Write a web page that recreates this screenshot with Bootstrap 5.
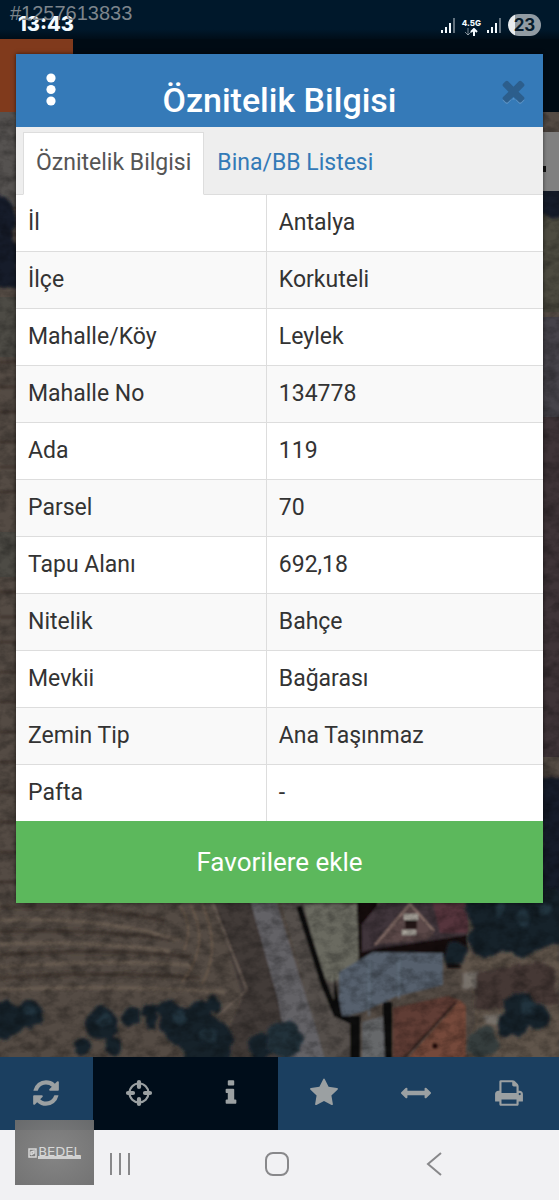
<!DOCTYPE html>
<html lang="tr">
<head>
<meta charset="utf-8">
<meta name="viewport" content="width=device-width, initial-scale=1">
<title>Öznitelik Bilgisi</title>
<link href="https://cdn.jsdelivr.net/npm/bootstrap@5.3.0/dist/css/bootstrap.min.css" rel="stylesheet">
<style>
body{font-family:Roboto,sans-serif;font-size:23px;line-height:32px;color:#333;background:#000d18}
.statusbar{height:39px;background:linear-gradient(#00182b 75%,#000d18);padding:10px 18px 0;color:#f4fbff}
.status-icons{gap:6px}
.clock{font:800 20px/28px Inter,sans-serif}
.net{font:800 8px/10px Inter,sans-serif}
.battery{width:33px;height:22px;border-radius:11px;background:linear-gradient(90deg,#e8ecef 7px,#919ba3 7px);color:#071b2b;font:700 17px/22px Inter,sans-serif}
.listing-no{left:10px;top:2px;font:20px/23px "Liberation Sans",sans-serif;color:#7d858c}
.appbar{height:73px;background:#000b14}
.appbar-tile{width:73px;background:#803a1c}
.map-area{background:#4a453f;min-height:300px}
.map-area svg{display:block;left:0;top:0}
.sheet-layer{top:54px;padding:0 16px}
.sheet{background:#fff;box-shadow:0 0 4px rgba(0,0,0,.6)}
.sheet-head{height:73px;background:#357ab8;color:#fff}
.sheet-head h1{font-size:34px;line-height:40px;font-weight:500;padding-top:26px}
.icon-btn{border:0;background:none;padding:0;line-height:0;color:inherit}
.menu-btn{left:22px;top:16px;width:26px;color:#fff}
.close-btn{right:13px;top:20px;color:#2c5e8c}
.tabs{height:68px;background:#eee;border-bottom:1px solid #ddd;padding:5px 7px 0}
.tabs .nav-link{border:1px solid transparent;border-radius:0;padding:14px 12px;line-height:32px;color:#337ab7}
.tabs .nav-link.active{background:#fff;border-color:#ddd #ddd #fff;color:#555}
.tabs .nav-link{height:63px}
.facts{margin:0;color:#333;table-layout:fixed;line-height:32px}
.facts th,.facts td{font-weight:400;padding:12px;border:0;border-bottom:1px solid #ddd;box-shadow:none;background:#fff}
.facts th{width:47.5%;border-right:1px solid #ddd}
.facts tr:nth-child(even)>*{background:#f9f9f9}
.facts tr:last-child>*{border-bottom:0}
.fav-btn,.fav-btn:hover{background:#5cb85c;border:0;border-radius:0;color:#fff;font-size:26px;line-height:34px;padding:24px 12px}
.toolbar{height:73px;background:#1b3f60;padding-right:4px}
.toolbar button{flex:1 1 0;background:#1b3f60;color:#9ba0a2}
.toolbar button.dim{background:#000d1a}
.toolbar svg{width:30px;height:30px;margin-bottom:2px}
.sysnav{height:70px;background:#f1f1f3;color:#88888a;gap:132px;padding:0 6px 2px 0}
.brand-mark{left:15px;bottom:15px;width:79px;height:65px;background:radial-gradient(rgba(130,130,130,.97),rgba(108,108,108,.95));color:#d8d8d8;gap:1px}
.brand-mark b{font:13px/9px "DejaVu Sans",sans-serif;border-bottom:3px solid #d0d0d0}
</style>
</head>
<body>
<div class="position-relative min-vh-100 d-flex flex-column overflow-hidden">
  <header class="statusbar d-flex justify-content-between">
    <span class="clock">13:43</span>
    <div class="status-icons d-flex align-items-start">
      <svg width="15" height="16" viewBox="0 0 15 16" class="mt-2" fill="currentColor"><path d="M0 12h2v3H0zM4 9h2v6H4zM8 5h2v10H8z"/><path d="M12 0h2v15h-2z" opacity=".4"/></svg>
      <div class="net text-center mt-2">4.5G<svg class="d-block mx-auto" width="13" height="8" viewBox="0 0 13 8" fill="none" stroke="currentColor"><path d="M3 0v7M0 4l3 3 3-3" opacity=".5"/><path d="M9 8V1M6 4l3-3 3 3" stroke-width="2"/></svg></div>
      <svg width="15" height="16" viewBox="0 0 15 16" class="mt-2" fill="currentColor"><path d="M0 12h2v3H0zM4 9h2v6H4zM8 5h2v10H8z"/><path d="M12 0h2v15h-2z" opacity=".4"/></svg>
      <span class="battery text-center mt-1">23</span>
    </div>
  </header>
  <span class="listing-no position-absolute">#1257613833</span>
  <div class="appbar d-flex"><div class="appbar-tile"></div></div>

  <main class="map-area flex-fill position-relative">
    <svg class="position-absolute w-100 h-100" viewBox="0 0 559 945" preserveAspectRatio="xMidYMax slice" aria-hidden="true">
      <defs>
        <filter id="soft" x="-10%" y="-10%" width="120%" height="120%"><feTurbulence type="fractalNoise" baseFrequency=".06" numOctaves="3" seed="4" result="n"/><feDisplacementMap in="SourceGraphic" in2="n" scale="12" xChannelSelector="R" yChannelSelector="G"/><feGaussianBlur stdDeviation="1.6"/></filter>
        <filter id="edge"><feGaussianBlur stdDeviation=".9"/></filter>
        <filter id="grain" x="0" y="0" width="100%" height="100%"><feTurbulence type="fractalNoise" baseFrequency=".07 .1" numOctaves="4" seed="9"/><feColorMatrix values="0 0 0 0 0  0 0 0 0 0  0 0 0 0 0  1.6 0 0 0 -.6"/></filter>
      </defs>
      <rect width="559" height="945" fill="#544b44"/>
      <!-- field edges beside the dialog -->
      <path fill="#555250" d="M0 0h20v95H0z"/><path fill="#4d4b45" d="M0 185h20v60H0zM0 420h20v45H0z"/><path fill="#4d4b40" d="M540 80h19v120h-19z"/><path fill="#46434a" d="M540 205h19v100h-19z"/><path fill="#3f3438" d="M540 305h19v340h-19z"/>
      <g filter="url(#soft)" fill="#141e29"><path d="M-5 80l18 10 8 90-26-4zM538 60h30v50l-30-8zM540 665h30v130h-30z"/></g>
      <!-- ploughed field -->
      <g filter="url(#edge)" fill="none" stroke-width="4">
        <path stroke="#453b34" d="M0 250h22M0 275h22M0 300h22M0 330h22M0 355h22M0 380h22M0 480h22M0 505h22M0 530h22M0 560h22M0 590h22M0 620h22M0 650h22M0 680h22M0 710h22M0 740h22M0 770h22M0 795q90-3 165 14M0 820q90-4 180 8M0 843q110-8 190 2M0 866q100-8 200 0"/>
        <path stroke="#665a50" d="M0 808q100-4 180 20M0 832q90-4 170 7M0 855q110-8 190-2M0 878q100-6 225 2"/>
        <path stroke="#69594b" stroke-width="2" d="M190 792q22 40-8 78M202 792q20 45 0 80M180 794q14 20 4 44"/>
      </g>
      <g filter="url(#edge)">
        <path fill="#433b39" d="M214 788h40l32 100v60H215l28-62z"/>
        <path fill="none" stroke="#6d6158" stroke-width="2" d="M213 792l34 86-30 26"/>
        <path fill="#636266" d="M250 788h26l50 160h-38l-10-60z"/><path fill="#55504b" d="M280 788h60l15 160h-30z"/>
        <path fill="#6b6a61" d="M304 792h58v60l-28 18-12-3z"/><path fill="none" stroke="#11100f" stroke-width="6" d="M299 794l24 76 14 34"/>
        <path fill="#14100f" d="M357 788h20v28l90 6v34h-20v-12l-88 10z"/>
        <path fill="#41343a" d="M362 812l20-24h85v35l-87 13-18 4z"/><path fill="#56343d" d="M432 788h36v33h-28z"/><path fill="#5b4a49" d="M377 832l32-40 25 30-8 6z"/><path fill="none" stroke="#8c746d" stroke-width="2" d="M375 833l35-41 24 27"/><path fill="#a9a49c" d="M404 802h14v6h-14zM402 818h14v5h-14z"/><path fill="#221517" d="M405 808h12v9h-12z"/>
        <path fill="#57616d" d="M339 860l34-20 70 1v32l-48 12-6 3-26 12-24 6z"/><path fill="none" stroke="#66798a" d="M369 850v54M399 845v42"/>
        <path fill="#100b0a" d="M334 862l8 42h18v44h-10v-36l-16-8zM383 890h9v58h-9z"/><path fill="#66676b" d="M362 910l21-6 2 44h-23z"/>
        <path fill="#603c35" d="M393 896l55-12 12 4-60 60h-7z"/><path fill="#75493b" d="M460 888l6 6v54h-60z"/><path stroke="#35211e" stroke-width="2" d="M456 890l-54 58"/><circle cx="435" cy="934" r="3" fill="#20100e"/>
      </g>
      <path filter="url(#soft)" fill="#60554c" d="M448 840l111-10v128h-86V880z"/>
      <g filter="url(#soft)"><path fill="#453835" d="M473 862l50-12 30 4 10 40-90 4z"/><path fill="#77716a" d="M462 862h14v14h-14zM484 904l20-2v10h-20z"/></g>
      <!-- tree crowns -->
      <g filter="url(#soft)" fill="#15212b">
        <circle cx="488" cy="800" r="22"/><circle cx="488" cy="828" r="18"/><circle cx="520" cy="810" r="34"/><circle cx="550" cy="806" r="28"/><circle cx="455" cy="842" r="12"/>
        <circle cx="519" cy="898" r="17"/><circle cx="538" cy="906" r="12"/><circle cx="512" cy="912" r="14"/>
        <circle cx="8" cy="908" r="17"/><circle cx="30" cy="902" r="14"/><circle cx="102" cy="912" r="16"/><circle cx="84" cy="934" r="9"/><circle cx="112" cy="934" r="9"/>
        <circle cx="131" cy="904" r="9"/><circle cx="149" cy="898" r="9"/><circle cx="151" cy="910" r="7"/><circle cx="168" cy="898" r="12"/><circle cx="182" cy="914" r="20"/><circle cx="205" cy="930" r="27"/><circle cx="214" cy="892" r="9"/><circle cx="198" cy="902" r="13"/><circle cx="262" cy="934" r="14"/>
        <circle cx="284" cy="928" r="18" fill="#24303a"/><circle cx="484" cy="930" r="16" fill="#353c3c"/>
      </g>
      <g filter="url(#soft)" fill="#2c4250" opacity=".55"><circle cx="500" cy="796" r="7"/><circle cx="522" cy="806" r="8"/><circle cx="545" cy="796" r="7"/><circle cx="30" cy="898" r="6"/><circle cx="104" cy="908" r="7"/><circle cx="180" cy="906" r="8"/><circle cx="208" cy="924" r="9"/><circle cx="528" cy="896" r="7"/></g>
      <rect width="559" height="945" filter="url(#grain)" opacity=".4"/>
      <path fill="#808080" d="M540 20h19v59h-19z"/><path fill="#111" d="M542 54h4v6h-4z"/>
    </svg>
  </main>

  <div class="toolbar d-flex">
    <button class="icon-btn" aria-label="Yenile"><svg viewBox="0 0 1792 1792" fill="currentColor"><path d="M1639 1056q0 5-1 7-64 268-268 434.500t-478 166.500q-146 0-282.500-55t-243.500-157l-129 129q-19 19-45 19t-45-19-19-45v-448q0-26 19-45t45-19h448q26 0 45 19t19 45-19 45l-137 137q71 66 161 102t187 36q134 0 250-65t186-179q11-17 53-117 8-23 30-23h192q13 0 22.500 9.500t9.500 22.500zm25-800v448q0 26-19 45t-45 19h-448q-26 0-45-19t-19-45 19-45l138-138q-148-137-349-137-134 0-250 65t-186 179q-11 17-53 117-8 23-30 23h-199q-13 0-22.500-9.500t-9.500-22.500v-7q65-268 270-434.500t480-166.500q146 0 284 55.500t245 156.500l130-129q19-19 45-19t45 19 19 45z"/></svg></button>
    <button class="icon-btn dim" aria-label="Konum"><svg viewBox="0 0 30 30" fill="none" stroke="currentColor"><circle cx="15" cy="15" r="9.500" stroke-width="2.200"/><path d="M15 4v5M15 21v5M4 15h5M21 15h5" stroke-width="4.200" stroke-linecap="round"/></svg></button>
    <button class="icon-btn dim" aria-label="Bilgi"><svg viewBox="0 0 1792 1792" fill="currentColor"><path d="M1216 1344v128q0 26-19 45t-45 19h-512q-26 0-45-19t-19-45v-128q0-26 19-45t45-19h64v-384h-64q-26 0-45-19t-19-45v-128q0-26 19-45t45-19h384q26 0 45 19t19 45v576h64q26 0 45 19t19 45zm-128-1152v192q0 26-19 45t-45 19h-256q-26 0-45-19t-19-45v-192q0-26 19-45t45-19h256q26 0 45 19t19 45z"/></svg></button>
    <button class="icon-btn" aria-label="Favoriler"><svg viewBox="0 0 1792 1792" fill="currentColor"><path d="M1728 647q0 22-26 48l-363 354 86 500q1 7 1 20 0 21-10.500 35.500t-30.500 14.500q-19 0-40-12l-449-236-449 236q-22 12-40 12-21 0-31.500-14.500t-10.500-35.500q0-6 2-20l86-500-364-354q-25-27-25-48 0-37 56-46l502-73 225-455q19-41 49-41t49 41l225 455 502 73q56 9 56 46z"/></svg></button>
    <button class="icon-btn" aria-label="Ölçüm"><svg viewBox="0 0 1792 1792" fill="currentColor"><path d="M1792 896q0 26-19 45l-256 256q-19 19-45 19t-45-19-19-45v-128h-1024v128q0 26-19 45t-45 19-45-19l-256-256q-19-19-19-45t19-45l256-256q19-19 45-19t45 19 19 45v128h1024v-128q0-26 19-45t45-19 45 19l256 256q19 19 19 45z"/></svg></button>
    <button class="icon-btn" aria-label="Yazdır"><svg viewBox="0 0 1792 1792" fill="currentColor"><path d="M448 1536h896v-256h-896v256zm0-640h896v-384h-160q-40 0-68-28t-28-68v-160h-640v640zm1152 64q0-26-19-45t-45-19-45 19-19 45 19 45 45 19 45-19 19-45zm128 0v416q0 13-9.500 22.500t-22.500 9.500h-224v160q0 40-28 68t-68 28h-960q-40 0-68-28t-28-68v-160h-224q-13 0-22.500-9.500t-9.500-22.500v-416q0-79 56.500-135.500t135.500-56.500h64v-544q0-40 28-68t68-28h672q40 0 88 20t76 48l152 152q28 28 48 76t20 88v256h64q79 0 135.500 56.500t56.500 135.500z"/></svg></button>
  </div>
  <nav class="sysnav d-flex justify-content-center align-items-center">
    <button class="icon-btn" aria-label="Son uygulamalar"><svg width="24" height="24" viewBox="0 0 24 24" stroke="currentColor" stroke-width="2"><path d="M3 1v22M12 1v22M21 1v22"/></svg></button>
    <button class="icon-btn" aria-label="Ana ekran"><svg width="26" height="26" viewBox="0 0 26 26" fill="none" stroke="currentColor" stroke-width="2"><rect x="2" y="2" width="22" height="22" rx="7"/></svg></button>
    <button class="icon-btn" aria-label="Geri"><svg width="24" height="24" viewBox="0 0 24 24" fill="none" stroke="currentColor" stroke-width="2"><path d="M19 1L6 12l13 11"/></svg></button>
  </nav>
  <div class="brand-mark position-absolute d-flex align-items-center justify-content-center">
    <svg width="9" height="10" viewBox="0 0 9 10" fill="none" stroke="currentColor" stroke-width="1.500"><path d="M1 1h7v8H1zM3 7V4l3-1v2L3 7"/></svg><b>BEDEL</b>
  </div>

  <div class="sheet-layer position-absolute w-100">
    <section class="sheet" role="dialog" aria-labelledby="sheetTitle">
      <div class="sheet-head position-relative text-center">
        <button class="icon-btn menu-btn position-absolute" aria-label="Menü"><svg width="10" height="40" viewBox="0 0 10 40" fill="currentColor"><circle cx="5" cy="8" r="4.600"/><circle cx="5" cy="19.500" r="4.600"/><circle cx="5" cy="31" r="4.600"/></svg></button>
        <h1 class="m-0" id="sheetTitle">Öznitelik Bilgisi</h1>
        <button class="icon-btn close-btn position-absolute" aria-label="Kapat"><svg width="33" height="33" viewBox="0 0 1792 1792" fill="currentColor"><path fill="#5c93c5" d="M1490 1382q0 40-28 68l-136 136q-28 28-68 28t-68-28l-294-294-294 294q-28 28-68 28t-68-28l-136-136q-28-28-28-68z"/><path d="M1490 1322q0 40-28 68l-136 136q-28 28-68 28t-68-28l-294-294-294 294q-28 28-68 28t-68-28l-136-136q-28-28-28-68t28-68l294-294-294-294q-28-28-28-68t28-68l136-136q28-28 68-28t68 28l294 294 294-294q28-28 68-28t68 28l136 136q28 28 28 68t-28 68l-294 294 294 294q28 28 28 68z"/></svg></button>
      </div>
      <div class="tabs nav flex-nowrap">
        <a class="nav-link active" href="#bilgi">Öznitelik Bilgisi</a>
        <a class="nav-link" href="#liste">Bina/BB Listesi</a>
      </div>
      <table class="table facts" id="bilgi">
        <tbody>
          <tr><th scope="row">İl</th><td>Antalya</td></tr>
          <tr><th scope="row">İlçe</th><td>Korkuteli</td></tr>
          <tr><th scope="row">Mahalle/Köy</th><td>Leylek</td></tr>
          <tr><th scope="row">Mahalle No</th><td>134778</td></tr>
          <tr><th scope="row">Ada</th><td>119</td></tr>
          <tr><th scope="row">Parsel</th><td>70</td></tr>
          <tr><th scope="row">Tapu Alanı</th><td>692,18</td></tr>
          <tr><th scope="row">Nitelik</th><td>Bahçe</td></tr>
          <tr><th scope="row">Mevkii</th><td>Bağarası</td></tr>
          <tr><th scope="row">Zemin Tip</th><td>Ana Taşınmaz</td></tr>
          <tr><th scope="row">Pafta</th><td>-</td></tr>
        </tbody>
      </table>
      <button class="btn fav-btn w-100 d-block">Favorilere ekle</button>
    </section>
  </div>
</div>
<script src="https://cdn.jsdelivr.net/npm/bootstrap@5.3.0/dist/js/bootstrap.bundle.min.js"></script>
</body>
</html>
